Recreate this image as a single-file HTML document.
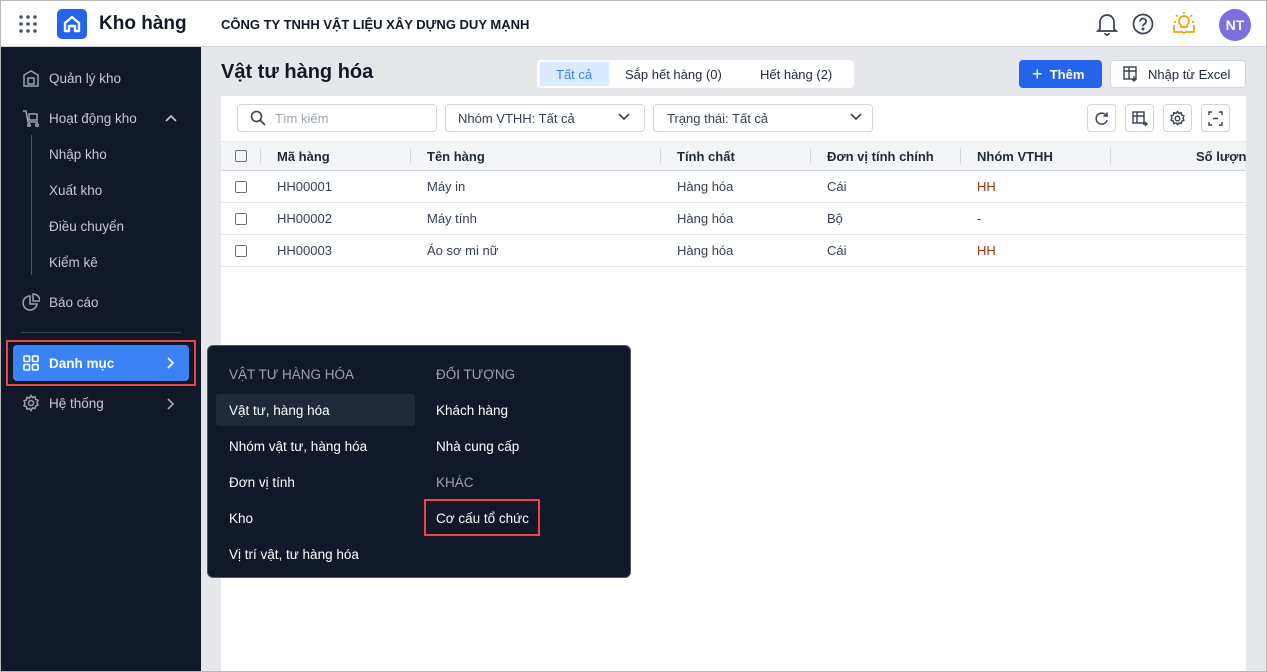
<!DOCTYPE html>
<html><head><meta charset="utf-8"><style>
*{box-sizing:border-box;margin:0;padding:0}
body{width:1267px;height:672px;overflow:hidden;font-family:"Liberation Sans",sans-serif;background:#e5e7eb;position:relative;font-size:13px;color:#111827}
.frame{position:absolute;inset:0;border:1px solid #b8b8b8;pointer-events:none;z-index:50}
.hdr{position:absolute;left:0;top:0;width:1267px;height:47px;background:#fff;border-bottom:1px solid #d1d5db}
.side{position:absolute;left:0;top:47px;width:201px;height:625px;background:#111827;color:#cbd5e1}
.nav{position:absolute;left:22px;display:flex;align-items:center;gap:9px;font-size:13.5px;color:#c4c9d2}
.sub{position:absolute;left:49px;font-size:13.5px;color:#c4c9d2}
.a{position:absolute}
.card{position:absolute;left:221px;top:96px;width:1025px;height:576px;background:#fff}
.box{position:absolute;border:1px solid #d1d5db;border-radius:4px;background:#fff}
.th{position:absolute;top:149px;font-weight:bold;font-size:13px;color:#1f2937;white-space:nowrap;overflow:hidden}
.td{position:absolute;font-size:13px;color:#374151}
.cb{position:absolute;left:235px;width:12px;height:12px;border:1px solid #6b7280;border-radius:2px}
.menu{position:absolute;left:207px;top:345px;width:424px;height:233px;background:#111827;border:1px solid #4b5563;border-radius:6px;color:#fff;font-size:13.5px}
.menu div{position:absolute}
.mh{color:#9ca3af;font-size:13.5px}
</style></head><body>
<div class="hdr">
<svg class="a" style="left:19px;top:15px" width="18" height="18"><g fill="#4b5563"><circle cx="2" cy="2" r="1.8"/><circle cx="9" cy="2" r="1.8"/><circle cx="16" cy="2" r="1.8"/><circle cx="2" cy="9" r="1.8"/><circle cx="9" cy="9" r="1.8"/><circle cx="16" cy="9" r="1.8"/><circle cx="2" cy="16" r="1.8"/><circle cx="9" cy="16" r="1.8"/><circle cx="16" cy="16" r="1.8"/></g></svg>
<svg class="a" style="left:57px;top:9px" width="30" height="30"><rect width="30" height="30" rx="5" fill="#2563eb"/><path d="M8 22V14L15 8L22 14V22H18V17H12V22Z" fill="none" stroke="#fff" stroke-width="2.4" stroke-linejoin="round"/></svg>
<div class="a" style="left:99px;top:13px;font-size:19px;font-weight:bold;color:#111827">Kho hàng</div>
<div class="a" style="left:221px;top:17px;font-size:13px;font-weight:bold;color:#111827">CÔNG TY TNHH VẬT LIỆU XÂY DỰNG DUY MẠNH</div>
<svg class="a" style="left:1096px;top:12px" width="22" height="24" fill="none" stroke="#374151" stroke-width="1.7"><path d="M4 17V10a7 7 0 0 1 14 0v7l2 2H2z"/><path d="M9 21a2 2 0 0 0 4 0"/></svg>
<svg class="a" style="left:1132px;top:13px" width="22" height="22" fill="none" stroke="#374151" stroke-width="1.7"><circle cx="11" cy="11" r="9.5"/><path d="M8 8.5a3 3 0 1 1 4 2.8c-1 .4-1 1-1 2"/><circle cx="11" cy="16" r=".6" fill="#374151"/></svg>
<svg class="a" style="left:1172px;top:10px" width="24" height="26" fill="none" stroke="#f59e0b" stroke-width="1.7"><path d="M12 2v2M4 5l1.5 1.5M20 5l-1.5 1.5M2 12h2M22 12h-2"/><path d="M9 15a5 5 0 1 1 6 0v2H9z"/><path d="M2 15v7h8l2 1 2-1h8v-7"/></svg>
<div class="a" style="left:1219px;top:9px;width:32px;height:32px;border-radius:50%;background:#7c6fe0;color:#fff;font-weight:bold;font-size:14px;text-align:center;line-height:32px">NT</div>
</div>
<div class="side">
<div class="nav" style="top:22px"><svg width="18" height="18" fill="none" stroke="#9ca3af" stroke-width="1.5"><path d="M2 17V6l7-4 7 4v11z"/><rect x="6" y="9" width="6" height="6"/></svg>Quản lý kho</div>
<div class="nav" style="top:62px"><svg width="18" height="18" fill="none" stroke="#9ca3af" stroke-width="1.5"><path d="M1 2h3l2 11h10"/><rect x="7" y="5" width="8" height="6"/><circle cx="7" cy="16" r="1.3"/><circle cx="15" cy="16" r="1.3"/></svg>Hoạt động kho</div>
<svg class="a" style="left:164px;top:66px" width="14" height="10" fill="none" stroke="#c4c9d2" stroke-width="1.6"><path d="M2 8l5-5 5 5"/></svg>
<div class="a" style="left:31px;top:88px;width:1px;height:140px;background:#4b5563"></div>
<div class="sub" style="top:100px">Nhập kho</div>
<div class="sub" style="top:136px">Xuất kho</div>
<div class="sub" style="top:172px">Điều chuyển</div>
<div class="sub" style="top:208px">Kiểm kê</div>
<div class="nav" style="top:246px"><svg width="18" height="18" fill="none" stroke="#9ca3af" stroke-width="1.5"><path d="M8 3a7 7 0 1 0 7 8H8z"/><path d="M11 1v7h7a7 7 0 0 0-7-7z"/></svg>Báo cáo</div>
<div class="a" style="left:21px;top:285px;width:160px;height:1px;background:#374151"></div>
<div class="a" style="left:6px;top:293px;width:190px;height:46px;border:2px solid #e5484d"></div>
<div class="a" style="left:13px;top:298px;width:176px;height:36px;background:#3b82f6;border-radius:4px"></div>
<div class="nav" style="top:307px;color:#fff;font-weight:bold"><svg width="18" height="18" fill="none" stroke="#fff" stroke-width="1.6"><rect x="2" y="2" width="5.5" height="5.5" rx="1"/><rect x="10.5" y="2" width="5.5" height="5.5" rx="1"/><rect x="2" y="10.5" width="5.5" height="5.5" rx="1"/><rect x="10.5" y="10.5" width="5.5" height="5.5" rx="1"/></svg>Danh mục</div>
<svg class="a" style="left:166px;top:309px" width="10" height="14" fill="none" stroke="#fff" stroke-width="1.7"><path d="M2 2l5 5-5 5"/></svg>
<div class="nav" style="top:347px"><svg width="18" height="18" fill="none" stroke="#9ca3af" stroke-width="1.5"><circle cx="9" cy="9" r="2.5"/><path d="M9 1.5l1.5 2 2.5-.7.6 2.5 2.4 1-1 2.4 1 2.4-2.4 1-.6 2.5-2.5-.7L9 16.5l-1.5-2-2.5.7-.6-2.5-2.4-1 1-2.4-1-2.4 2.4-1 .6-2.5 2.5.7z"/></svg>Hệ thống</div>
<svg class="a" style="left:166px;top:350px" width="10" height="14" fill="none" stroke="#9ca3af" stroke-width="1.7"><path d="M2 2l5 5-5 5"/></svg>
</div>
<div class="a" style="left:221px;top:61px;font-size:20px;font-weight:bold;color:#111827">Vật tư hàng hóa</div>
<div class="a" style="left:537px;top:60px;width:317px;height:28px;background:#fff;border-radius:4px"></div>
<div class="a" style="left:540px;top:62px;width:69px;height:24px;background:#dbeafe"></div>
<div class="a" style="left:556px;top:67px;color:#3b82f6">Tất cả</div>
<div class="a" style="left:625px;top:67px;color:#1f2937">Sắp hết hàng (0)</div>
<div class="a" style="left:760px;top:67px;color:#1f2937">Hết hàng (2)</div>
<div class="a" style="left:1019px;top:60px;width:83px;height:28px;background:#2563eb;border-radius:4px;color:#fff;font-weight:bold;line-height:28px;padding-left:13px"><span style="font-size:18px;font-weight:normal;vertical-align:-1px">+</span>&nbsp;&nbsp;Thêm</div>
<div class="box" style="left:1110px;top:60px;width:136px;height:28px"></div>
<svg class="a" style="left:1123px;top:66px" width="16" height="16" fill="none" stroke="#374151" stroke-width="1.4"><rect x="1" y="1" width="12" height="12"/><path d="M1 5h12M6 1v12M11 10l0 5M9 13l2 2 2-2"/></svg>
<div class="a" style="left:1148px;top:67px;color:#1f2937">Nhập từ Excel</div>
<div class="card"></div>
<div class="box" style="left:237px;top:104px;width:200px;height:28px"></div>
<svg class="a" style="left:250px;top:110px" width="16" height="16" fill="none" stroke="#374151" stroke-width="1.6"><circle cx="6.5" cy="6.5" r="5"/><path d="M10 10l5 5"/></svg>
<div class="a" style="left:275px;top:111px;color:#9ca3af">Tìm kiếm</div>
<div class="box" style="left:445px;top:104px;width:200px;height:28px"></div>
<div class="a" style="left:458px;top:111px;color:#374151">Nhóm VTHH: Tất cả</div>
<svg class="a" style="left:617px;top:112px" width="14" height="10" fill="none" stroke="#374151" stroke-width="1.6"><path d="M2 2l5 5 5-5"/></svg>
<div class="box" style="left:653px;top:104px;width:220px;height:28px"></div>
<div class="a" style="left:667px;top:111px;color:#374151">Trạng thái: Tất cả</div>
<svg class="a" style="left:849px;top:112px" width="14" height="10" fill="none" stroke="#374151" stroke-width="1.6"><path d="M2 2l5 5 5-5"/></svg>
<div class="box" style="left:1087px;top:104px;width:29px;height:28px"></div>
<svg class="a" style="left:1094px;top:111px" width="15" height="15" fill="none" stroke="#374151" stroke-width="1.5"><path d="M12.5 5A5.5 5.5 0 1 0 13 9"/><path d="M13 1.5V5H9.5"/></svg>
<div class="box" style="left:1125px;top:104px;width:29px;height:28px"></div>
<svg class="a" style="left:1132px;top:111px" width="16" height="16" fill="none" stroke="#374151" stroke-width="1.4"><rect x="1" y="1" width="11" height="11"/><path d="M1 5h11M5 1v11M11 13h4M13 11l2 2-2 2"/></svg>
<div class="box" style="left:1163px;top:104px;width:29px;height:28px"></div>
<svg class="a" style="left:1169px;top:110px" width="17" height="17" fill="none" stroke="#374151" stroke-width="1.4"><circle cx="8.5" cy="8.5" r="2.3"/><path d="M8.5 1.5l1.4 1.8 2.3-.6.5 2.3 2.2.9-.9 2.2.9 2.2-2.2.9-.5 2.3-2.3-.6-1.4 1.8-1.4-1.8-2.3.6-.5-2.3-2.2-.9.9-2.2-.9-2.2 2.2-.9.5-2.3 2.3.6z"/></svg>
<div class="box" style="left:1201px;top:104px;width:29px;height:28px"></div>
<svg class="a" style="left:1208px;top:111px" width="15" height="15" fill="none" stroke="#374151" stroke-width="1.4"><path d="M1 4V1h3M11 1h3v3M14 11v3h-3M4 14H1v-3M5 7.5h5"/></svg>
<div class="a" style="left:221px;top:141px;width:1025px;height:30px;background:#f3f4f6;border-top:1px solid #e5e7eb;border-bottom:1px solid #d1d5db"></div>
<div class="a" style="left:260px;top:148px;width:1px;height:16px;background:#d1d5db"></div>
<div class="a" style="left:410px;top:148px;width:1px;height:16px;background:#d1d5db"></div>
<div class="a" style="left:660px;top:148px;width:1px;height:16px;background:#d1d5db"></div>
<div class="a" style="left:810px;top:148px;width:1px;height:16px;background:#d1d5db"></div>
<div class="a" style="left:960px;top:148px;width:1px;height:16px;background:#d1d5db"></div>
<div class="a" style="left:1110px;top:148px;width:1px;height:16px;background:#d1d5db"></div>
<div class="cb" style="top:150px"></div>
<div class="th" style="left:277px">Mã hàng</div><div class="th" style="left:427px">Tên hàng</div><div class="th" style="left:677px">Tính chất</div><div class="th" style="left:827px">Đơn vị tính chính</div><div class="th" style="left:977px">Nhóm VTHH</div><div class="th" style="left:1196px;width:50px">Số lượng</div>
<div class="a" style="left:221px;top:202px;width:1025px;height:1px;background:#e5e7eb"></div>
<div class="a" style="left:221px;top:234px;width:1025px;height:1px;background:#e5e7eb"></div>
<div class="a" style="left:221px;top:266px;width:1025px;height:1px;background:#e5e7eb"></div>
<div class="cb" style="top:181px"></div><div class="td" style="left:277px;top:179px">HH00001</div><div class="td" style="left:427px;top:179px">Máy in</div><div class="td" style="left:677px;top:179px">Hàng hóa</div><div class="td" style="left:827px;top:179px">Cái</div><div class="td" style="left:977px;top:179px;color:#9a3412">HH</div>
<div class="cb" style="top:213px"></div><div class="td" style="left:277px;top:211px">HH00002</div><div class="td" style="left:427px;top:211px">Máy tính</div><div class="td" style="left:677px;top:211px">Hàng hóa</div><div class="td" style="left:827px;top:211px">Bộ</div><div class="td" style="left:977px;top:211px">-</div>
<div class="cb" style="top:245px"></div><div class="td" style="left:277px;top:243px">HH00003</div><div class="td" style="left:427px;top:243px">Áo sơ mi nữ</div><div class="td" style="left:677px;top:243px">Hàng hóa</div><div class="td" style="left:827px;top:243px">Cái</div><div class="td" style="left:977px;top:243px;color:#9a3412">HH</div>
<div class="menu">
<div class="mh" style="left:21px;top:21px">VẬT TƯ HÀNG HÓA</div>
<div style="left:8px;top:48px;width:199px;height:32px;background:#1f2937;border-radius:3px"></div>
<div style="left:21px;top:57px">Vật tư, hàng hóa</div>
<div style="left:21px;top:93px">Nhóm vật tư, hàng hóa</div>
<div style="left:21px;top:129px">Đơn vị tính</div>
<div style="left:21px;top:165px">Kho</div>
<div style="left:21px;top:201px">Vị trí vật, tư hàng hóa</div>
<div class="mh" style="left:228px;top:21px">ĐỐI TƯỢNG</div>
<div style="left:228px;top:57px">Khách hàng</div>
<div style="left:228px;top:93px">Nhà cung cấp</div>
<div class="mh" style="left:228px;top:129px">KHÁC</div>
<div style="left:216px;top:153px;width:116px;height:37px;border:2px solid #e5484d"></div>
<div style="left:228px;top:165px">Cơ cấu tổ chức</div>
</div>
<div class="frame"></div>
</body></html>
